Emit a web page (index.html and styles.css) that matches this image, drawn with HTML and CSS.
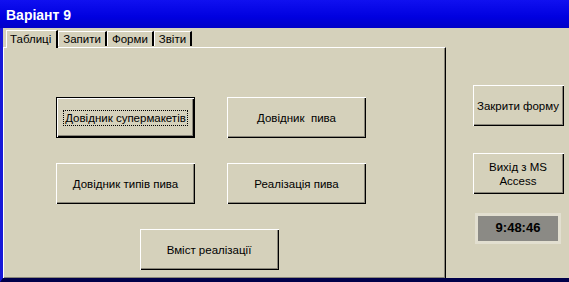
FILE: index.html
```html
<!DOCTYPE html>
<html>
<head>
    <link rel="stylesheet" href="styles.css">
</head>
<body>
    <div class="window">
        <div class="titlebar">Варіант 9</div>
        <div class="frame">
            <div class="left">
                <div class="tabs">
                    <div class="tab active">Таблиці</div>
                    <div class="tab">Запити</div>
                    <div class="tab">Форми</div>
                    <div class="tab">Звіти</div>
                </div>
                <div class="panel">
                    <div class="grid">
                        <button class="btn default"><span class="focus">Довідник супермакетів</span></button>
                        <button class="btn">Довідник&nbsp; пива</button>
                        <button class="btn">Довідник типів пива</button>
                        <button class="btn">Реалізація пива</button>
                        <button class="btn wide">Вміст реалізації</button>
                    </div>
                </div>
            </div>
            <div class="side">
                <button class="btn small">Закрити форму</button>
                <button class="btn small">Вихід з MS<br>Access</button>
                <div class="clock">9:48:46</div>
            </div>
        </div>
    </div>
</body>
</html>
```

FILE: styles.css
```css
body {
    margin: 0;
    font-family: "Liberation Sans", Arial, sans-serif;
    font-size: 11.5px;
}

.window {
    width: 569px;
    height: 282px;
    background: #d5d1bb;
    overflow: hidden;
}

.titlebar {
    height: 28px;
    line-height: 30px;
    padding-left: 6px;
    background: linear-gradient(to bottom, #1010f0, #0000e0 60%, #0000c8);
    color: #fff;
    font-weight: bold;
    font-size: 14px;
    box-sizing: border-box;
}

.frame {
    display: flex;
    height: 254px;
    border-left: 3px solid #1818d8;
    border-bottom: 4px solid #00004a;
    box-sizing: border-box;
}

.left {
    width: 443px;
    display: flex;
    flex-direction: column;
}

.tabs {
    display: flex;
    align-items: flex-end;
    height: 19px;
    padding-left: 3px;
}

.tab {
    height: 14px;
    padding: 0 4px;
    line-height: 15px;
    border-top: 1px solid #fff;
    border-left: 1px solid #fff;
    border-right: 2px solid #000;
    color: #000;
    margin-bottom: 1px;
}

.tab.active {
    position: relative;
    z-index: 1;
    height: 17px;
    line-height: 17px;
    margin-bottom: -1px;
    padding: 0 5px 0 3px;
    background: #d5d1bb;
}

.panel {
    flex: 1;
    border-top: 1px solid #fff;
    border-left: 1px solid #fff;
    border-right: 1px solid #000;
    box-shadow: inset -1px -1px 0 #8a877a;
}

.grid {
    display: grid;
    grid-template-columns: 139px 139px;
    grid-auto-rows: 41px;
    column-gap: 32px;
    row-gap: 25px;
    padding: 49px 0 0 52px;
}

.btn {
    font-family: "Liberation Sans", Arial, sans-serif;
    font-size: 11.5px;
    color: #000;
    background: #d5d1bb;
    border: none;
    padding: 0;
    box-shadow: inset 1px 1px 0 #fff, inset -1px -1px 0 #000, inset -2px -2px 0 #8a877a;
}

.btn.default {
    border: 1px solid #000;
}

.focus {
    border: 1px dotted #000;
    padding: 1px 1px;
}

.btn.wide {
    grid-column: 1 / 3;
    justify-self: center;
    width: 139px;
    margin-left: -4px;
}

.side {
    flex: 1;
    display: flex;
    flex-direction: column;
    align-items: center;
    padding-top: 57px;
    padding-left: 21px;
}

.btn.small {
    width: 91px;
    height: 41px;
    line-height: 14px;
    margin-bottom: 27px;
}

.btn.small + .btn.small {
    margin-bottom: 22px;
}

.clock {
    width: 80px;
    height: 25px;
    line-height: 24px;
    text-align: center;
    background: #8b8a85;
    font-weight: bold;
    font-size: 13px;
    outline: 3px solid #e2dfd0;
}
```
